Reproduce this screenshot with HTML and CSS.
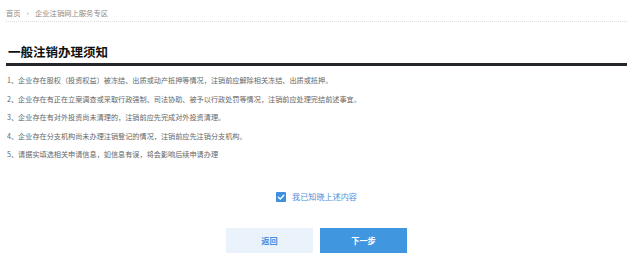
FILE: index.html
```html
<!DOCTYPE html>
<html lang="zh-CN">
<head>
<meta charset="utf-8">
<link rel="stylesheet" href="styles.css">
</head>
<body>
<div class="page">
  <div class="crumb">
    <span class="crumb-link">首页</span>
    <span class="crumb-sep">›</span>
    <span class="crumb-cur">企业注销网上服务专区</span>
  </div>
  <h1 class="title">一般注销办理须知</h1>
  <ul class="notes">
    <li>1、企业存在股权（投资权益）被冻结、出质或动产抵押等情况，注销前应解除相关冻结、出质或抵押。</li>
    <li>2、企业存在有正在立案调查或采取行政强制、司法协助、被予以行政处罚等情况，注销前应处理完结前述事宜。</li>
    <li>3、企业存在有对外投资尚未清理的，注销前应先完成对外投资清理。</li>
    <li>4、企业存在分支机构尚未办理注销登记的情况，注销前应先注销分支机构。</li>
    <li>5、请据实填选相关申请信息，如信息有误，将会影响后续申请办理</li>
  </ul>
  <div class="agree">
    <span class="box"><svg viewBox="0 0 10 10" width="10" height="10"><path d="M2.4 5.2 L4.3 7 L7.8 3.2" fill="none" stroke="#fff" stroke-width="1.4" stroke-linecap="round" stroke-linejoin="round"/></svg></span>
    <span class="agree-text">我已知晓上述内容</span>
  </div>
  <div class="actions">
    <button class="btn btn-back">返回</button>
    <button class="btn btn-next">下一步</button>
  </div>
</div>
</body>
</html>
```

FILE: styles.css
```css
html, body {
  margin: 0;
  padding: 0;
  background: #fff;
}
body {
  font-family: "Noto Sans CJK SC", "Microsoft YaHei", "Liberation Sans", sans-serif;
}
.page {
  width: 621px;
  margin-left: 6px;
}
.crumb {
  padding-top: 8px;
  padding-bottom: 3px;
  line-height: 10px;
  height: 10px;
  font-size: 7.3px;
  color: #8a8a8a;
  border-bottom: 1px dotted #dcdcdc;
  display: flex;
  gap: 6px;
}
.crumb-sep {
  color: #aaa;
  font-size: 8px;
}
.title {
  margin: 0;
  padding-top: 22px;
  padding-bottom: 3px;
  padding-left: 2px;
  line-height: 16px;
  font-size: 12.5px;
  font-weight: 700;
  color: #111;
  border-bottom: 3px solid #23262b;
}
.notes {
  list-style: none;
  margin: 0;
  padding: 5px 0 0 1px;
  font-size: 7.15px;
  line-height: 18.6px;
  color: #666;
}
.agree {
  margin-top: 27px;
  display: flex;
  justify-content: center;
  align-items: center;
  gap: 6px;
  height: 12px;
}
.box {
  width: 10px;
  height: 10px;
  background: #3f8fe0;
  border-radius: 1px;
  display: flex;
}
.agree-text {
  font-size: 8.1px;
  color: #4a8fdc;
}
.actions {
  margin-top: 25px;
  display: flex;
  justify-content: center;
  gap: 7px;
}
.btn {
  width: 87px;
  height: 25px;
  border: 0;
  padding: 0;
  font-family: inherit;
  font-size: 8.2px;
  font-weight: 700;
}
.btn-back {
  background: #eaf3fc;
  color: #3f8fe0;
}
.btn-next {
  background: #4196e0;
  color: #fff;
}
```
